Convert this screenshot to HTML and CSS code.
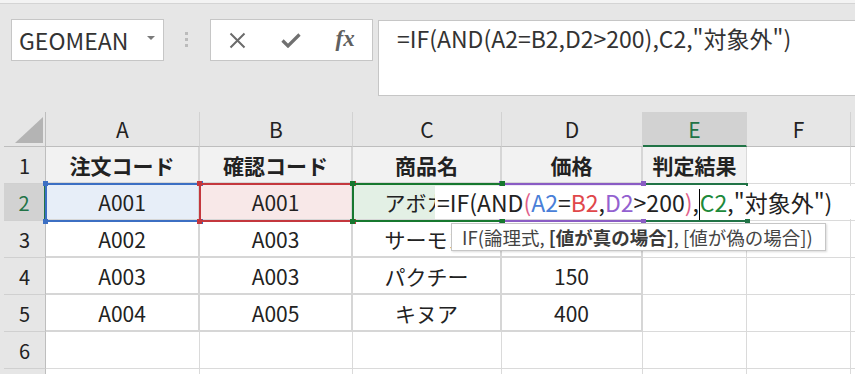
FILE: index.html
```html
<!DOCTYPE html>
<html lang="ja">
<head>
  <meta charset="utf-8" />
  <title>Excel - IF AND</title>
  <link rel="stylesheet" href="styles.css">
</head>
<body>
  <div class="topline"></div>

  <!-- formula bar -->
  <div class="formula-bar">
    <div class="name-box">
      <span>GEOMEAN</span>
      <span class="dropdown"></span>
    </div>
    <div class="grip"><i></i><i></i><i></i></div>
    <div class="fx-buttons">
      <svg width="17" height="17" viewBox="0 0 17 17">
        <path d="M1.5 1.5 L15.5 15.5 M15.5 1.5 L1.5 15.5" stroke="#6b6b6b" stroke-width="2" fill="none" />
      </svg>
      <svg width="20" height="15" viewBox="0 0 20 15">
        <path d="M1.5 7.5 L7 13 L18.5 1.5" stroke="#707070" stroke-width="3.2" fill="none" />
      </svg>
      <span class="fx">fx</span>
    </div>
    <div class="formula-input">=IF(AND(A2=B2,D2&gt;200),C2,"対象外")</div>
  </div>

  <!-- sheet -->
  <div class="sheet">
    <div class="grid">
      <div class="corner"><span class="tri"></span></div>
      <div class="ch">A</div>
      <div class="ch">B</div>
      <div class="ch">C</div>
      <div class="ch">D</div>
      <div class="ch active">E</div>
      <div class="ch">F</div>
      <div class="ch"></div>

      <div class="rh">1</div>
      <div class="c tb head">注文コード</div>
      <div class="c tb head">確認コード</div>
      <div class="c tb head">商品名</div>
      <div class="c tb head">価格</div>
      <div class="c head">判定結果</div>
      <div class="c"></div>
      <div class="c"></div>

      <div class="rh active">2</div>
      <div class="c tb fill-a">A001</div>
      <div class="c tb fill-b">A001</div>
      <div class="c tb fill-c">アボカド</div>
      <div class="c tb fill-d"></div>
      <div class="c"></div>
      <div class="c"></div>
      <div class="c"></div>

      <div class="rh">3</div>
      <div class="c tb">A002</div>
      <div class="c tb">A003</div>
      <div class="c tb">サーモン</div>
      <div class="c tb"></div>
      <div class="c"></div>
      <div class="c"></div>
      <div class="c"></div>

      <div class="rh">4</div>
      <div class="c tb">A003</div>
      <div class="c tb">A003</div>
      <div class="c tb">パクチー</div>
      <div class="c tb">150</div>
      <div class="c"></div>
      <div class="c"></div>
      <div class="c"></div>

      <div class="rh">5</div>
      <div class="c tb">A004</div>
      <div class="c tb">A005</div>
      <div class="c tb">キヌア</div>
      <div class="c tb">400</div>
      <div class="c"></div>
      <div class="c"></div>
      <div class="c"></div>

      <div class="rh">6</div>
      <div class="c"></div>
      <div class="c"></div>
      <div class="c"></div>
      <div class="c"></div>
      <div class="c"></div>
      <div class="c"></div>
      <div class="c"></div>

      <div class="rh"></div>
      <div class="c"></div>
      <div class="c"></div>
      <div class="c"></div>
      <div class="c"></div>
      <div class="c"></div>
      <div class="c"></div>
      <div class="c"></div>
    </div>

    <!-- range highlights while editing E2 -->
    <div class="ref ref-e"><i class="h br"></i></div>
    <div class="ref ref-a"><i class="h tl"></i><i class="h tr"></i><i class="h bl"></i><i class="h br"></i></div>
    <div class="ref ref-d"><i class="h tl"></i><i class="h tr"></i><i class="h bl"></i><i class="h br"></i></div>
    <div class="ref ref-b"><i class="h tl"></i><i class="h tr"></i><i class="h bl"></i><i class="h br"></i></div>
    <div class="ref ref-c"><i class="h tl"></i><i class="h tr"></i><i class="h bl"></i><i class="h br"></i></div>

    <div class="cell-edit">=IF(AND<span class="paren">(</span><span class="k-a">A2</span>=<span class="k-b">B2</span>,<span class="k-d">D2</span>&gt;200<span class="paren">)</span>,<span class="caret"></span><span class="k-c">C2</span>,"対象外")</div>

    <div class="tip">IF(論理式, <b>[値が真の場合]</b>, [値が偽の場合])</div>
  </div>
</body>
</html>
```

FILE: styles.css
```css
* {
  box-sizing: border-box;
}

body {
  margin: 0;
  height: 374px;
  overflow: hidden;
  background: #e6e6e6;
  font-family: "Noto Sans CJK JP", "Noto Sans", sans-serif;
  color: #222;
}

.topline {
  height: 4px;
  background: #f3f3f3;
  border-bottom: 1px solid #d4d4d4;
}

/* formula bar */
.formula-bar {
  display: flex;
  align-items: flex-start;
  padding: 15px 0 16px 11px;
}

.name-box {
  width: 153px;
  height: 42px;
  background: #fff;
  border: 1px solid #c6c6c6;
  display: flex;
  align-items: center;
  justify-content: space-between;
  padding: 0 8px 0 7px;
  font-size: 23px;
  color: #333;
}

.dropdown {
  width: 0;
  height: 0;
  border-left: 4px solid transparent;
  border-right: 4px solid transparent;
  border-top: 4px solid #7a7a7a;
  margin-top: -4px;
}

.grip {
  display: flex;
  flex-direction: column;
  gap: 3px;
  margin: 13px 22px 0 21px;
}

.grip i {
  display: block;
  width: 3px;
  height: 3px;
  background: #bbb;
}

.fx-buttons {
  width: 163px;
  height: 42px;
  background: #fff;
  border: 1px solid #c6c6c6;
  display: grid;
  grid-template-columns: repeat(3, 1fr);
  align-items: center;
  justify-items: center;
}

.fx {
  font-family: "Liberation Serif", serif;
  font-style: italic;
  font-weight: bold;
  font-size: 23px;
  color: #606060;
  margin-top: -3px;
}

.formula-input {
  flex: 1;
  height: 76px;
  margin: 1px -2px 0 5px;
  background: #fff;
  border: 1px solid #c6c6c6;
  padding: 2px 0 0 18px;
  font-size: 23px;
  line-height: 30px;
  color: #333;
  white-space: nowrap;
}

/* sheet */
.sheet {
  position: relative;
  padding-left: 4px;
  height: 262px;
  overflow: hidden;
}

.grid {
  display: grid;
  grid-template-columns: 42px 154px 153px 149px 141px 104px 104px 100px;
  grid-template-rows: 35px repeat(7, 37px);
}

.corner {
  background: #e6e6e6;
  border-right: 1px solid #bebebe;
  border-bottom: 1px solid #bebebe;
  display: flex;
  justify-content: flex-end;
  align-items: flex-end;
  padding: 0 2px 3px 0;
}

.tri {
  width: 0;
  height: 0;
  border-left: 28px solid transparent;
  border-bottom: 26px solid #b4b4b4;
}

.ch {
  background: #e6e6e6;
  border-right: 1px solid #d2d2d2;
  border-bottom: 1px solid #bebebe;
  display: flex;
  align-items: center;
  justify-content: center;
  font-size: 21px;
}

.ch.active {
  background: #d2d2d2;
  color: #217346;
  border-bottom: 2px solid #217346;
}

.rh {
  background: #e6e6e6;
  border-right: 1px solid #bebebe;
  border-bottom: 1px solid #d0d0d0;
  display: flex;
  align-items: center;
  justify-content: center;
  font-size: 20px;
}

.rh.active {
  background: #d2d2d2;
  color: #217346;
  border-right: 2px solid #217346;
}

.c {
  background: #fff;
  border-right: 1px solid #dadada;
  border-bottom: 1px solid #dadada;
  display: flex;
  align-items: center;
  justify-content: center;
  font-size: 21px;
  white-space: nowrap;
  overflow: hidden;
}

.c.tb {
  border-right: 2px solid #d6d6d6;
  border-bottom: 2px solid #d6d6d6;
}

.c.head {
  background: #f2f2f2;
  font-weight: bold;
}

.fill-a { background: #e7eef8; }
.fill-b { background: #f8e8e8; }
.fill-c { background: #e3f0e5; }
.fill-d { background: #efe9f7; }

/* reference outlines */
.ref {
  position: absolute;
  top: 71px;
  height: 39px;
  border: 2px solid;
}

.ref-a { left: 45px; width: 156px; border-color: #3c6fc3; z-index: 2; }
.ref-b { left: 199px; width: 155px; border-color: #c4373d; z-index: 4; }
.ref-c { left: 352px; width: 151px; border-color: #17782f; z-index: 5; }
.ref-d { left: 501px; width: 143px; border-color: #8a5cc4; z-index: 3; }
.ref-e { left: 642px; width: 106px; border-color: #217346; z-index: 1; }

.h {
  position: absolute;
  width: 5px;
  height: 5px;
}

.ref-a .h { background: #3c6fc3; }
.ref-b .h { background: #c4373d; }
.ref-c .h { background: #17782f; }
.ref-d .h { background: #8a5cc4; }
.ref-e .h { background: #217346; }

.h.tl { left: -4px; top: -4px; }
.h.tr { right: -4px; top: -4px; }
.h.bl { left: -4px; bottom: -4px; }
.h.br { right: -4px; bottom: -4px; }

/* in-cell editor */
.cell-edit {
  position: absolute;
  left: 435px;
  top: 74px;
  width: 430px;
  height: 33px;
  z-index: 6;
  background: #fff;
  padding-left: 2px;
  font-size: 23px;
  line-height: 33px;
  white-space: nowrap;
  color: #222;
}

.paren { color: #e0608a; }
.k-a { color: #4a7fd8; }
.k-b { color: #e0474b; }
.k-c { color: #1d8a3b; }
.k-d { color: #9361d0; }

.caret {
  display: inline-block;
  width: 1px;
  height: 31px;
  background: #000;
  vertical-align: middle;
  margin-top: -2px;
}

.tip {
  position: absolute;
  left: 451px;
  top: 111px;
  width: 375px;
  height: 28px;
  z-index: 7;
  background: #fff;
  border: 1px solid #c6c6c6;
  box-shadow: 1px 1px 2px rgba(0, 0, 0, 0.15);
  padding-left: 10px;
  font-size: 18.5px;
  line-height: 26px;
  color: #444;
  white-space: nowrap;
}

.tip b {
  color: #3a3a3a;
}
```
